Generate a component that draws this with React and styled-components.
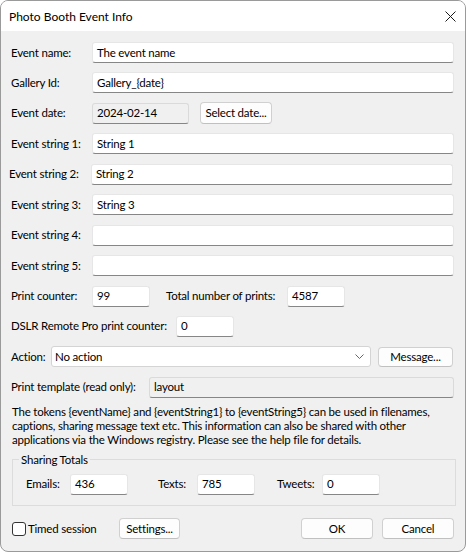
import React from "react"
import styled, { createGlobalStyle } from "styled-components"

const GlobalStyle = createGlobalStyle`
  html, body {
    margin: 0;
    padding: 0;
    background: #ffffff;
  }
  * {
    box-sizing: border-box;
  }
`

const Window = styled.div`
  width: 466px;
  height: 552px;
  border: 1px solid #9a9a9a;
  border-radius: 8px;
  overflow: hidden;
  background: #f0f0f0;
  font-family: Lato, "Noto Sans", sans-serif;
  font-size: 11.5px;
  letter-spacing: -0.2px;
  color: #000;
  display: flex;
  flex-direction: column;
`

const TitleBar = styled.div`
  height: 30px;
  background: #fff;
  display: flex;
  align-items: center;
  justify-content: space-between;
  padding: 0 8px 0 8px;
  flex: none;
`

const Title = styled.span`
  font-size: 12px;
  letter-spacing: 0;
  line-height: 14px;
  margin-top: 1px;
`

const CloseIcon = styled.svg`
  width: 11px;
  height: 11px;
  margin-right: 1px;
`

const Form = styled.div`
  padding: 11px 11px 0 10px;
  display: flex;
  flex-direction: column;
`

const Fields = styled.div`
  display: flex;
  flex-direction: column;
  gap: 9.45px;
`

const Row = styled.div`
  display: flex;
  align-items: center;
  height: 21px;
  margin-left: ${(p) => (p.$shift ? "-2px" : "0")};
  margin-right: ${(p) => (p.$shift ? "1px" : "0")};
`

const Label = styled.span`
  flex: none;
  width: ${(p) => p.$w}px;
  margin-left: ${(p) => p.$ml || 0}px;
  white-space: nowrap;
  line-height: 14px;
`

const Input = styled.div`
  flex: ${(p) => (p.$w ? "none" : "1")};
  width: ${(p) => (p.$w ? `${p.$w}px` : "auto")};
  height: 21px;
  border: 1px solid ${(p) => (p.$readonly ? "#dadada" : "#e6e6e6")};
  border-bottom-color: #868686;
  border-radius: 3px;
  background: ${(p) => (p.$readonly ? "#f0f0f0" : "#fff")};
  padding: 0 4px;
  display: flex;
  align-items: center;
  line-height: 14px;
  white-space: nowrap;
`

const Button = styled.div`
  flex: none;
  width: ${(p) => p.$w}px;
  height: ${(p) => p.$h || 21}px;
  margin-left: ${(p) => p.$ml || 0}px;
  border: 1px solid #d0d0d0;
  border-bottom-color: #c0c0c0;
  border-radius: 4px;
  background: #fdfdfd;
  display: flex;
  align-items: center;
  justify-content: center;
  line-height: 14px;
  white-space: nowrap;
`

const Select = styled.div`
  flex: none;
  width: 320px;
  height: 21px;
  margin-left: 40px;
  border: 1px solid #d4d4d4;
  border-radius: 3px;
  background: #fff;
  display: flex;
  align-items: center;
  justify-content: space-between;
  padding: 0 6px 0 3px;
  line-height: 14px;
`

const Chevron = styled.svg`
  width: 9px;
  height: 5px;
`

const Note = styled.p`
  margin: 7px 0 0 1px;
  line-height: 14px;
  white-space: nowrap;
`

const Group = styled.fieldset`
  margin: 6px 0 0 1px;
  width: 444px;
  border: 1px solid #dcdcdc;
  padding: 0 0 10px 0;
`

const Legend = styled.legend`
  margin-left: 6px;
  padding: 0 2px;
  line-height: 14px;
`

const ShareRow = styled.div`
  display: flex;
  align-items: center;
  height: 21px;
  margin-top: 7px;
  padding-left: 13px;
`

const Footer = styled.div`
  display: flex;
  align-items: center;
  height: 22px;
  margin-top: 12px;
  margin-left: 1px;
`

const Check = styled.span`
  flex: none;
  width: 14px;
  height: 14px;
  border: 1px solid #333;
  border-radius: 3px;
  background: #fff;
  margin-right: 2px;
`

const Spacer = styled.div`
  flex: 1;
`

const App = () => (
  <>
    <GlobalStyle />
    <Window>
      <TitleBar>
        <Title>Photo Booth Event Info</Title>
        <CloseIcon viewBox="0 0 11 11">
          <path d="M0.5 0.5 L10.5 10.5 M10.5 0.5 L0.5 10.5" stroke="#1a1a1a" strokeWidth="1" />
        </CloseIcon>
      </TitleBar>
      <Form>
        <Fields>
          <Row>
            <Label $w={81}>Event name:</Label>
            <Input>The event name</Input>
          </Row>
          <Row>
            <Label $w={81}>Gallery Id:</Label>
            <Input>Gallery_{"{date}"}</Input>
          </Row>
          <Row>
            <Label $w={81}>Event date:</Label>
            <Input $w={97} $readonly>
              2024-02-14
            </Input>
            <Button $w={72} $h={22} $ml={11}>
              Select date...
            </Button>
          </Row>
          <Row>
            <Label $w={81}>Event string 1:</Label>
            <Input>String 1</Input>
          </Row>
          <Row $shift>
            <Label $w={82}>Event string 2:</Label>
            <Input>String 2</Input>
          </Row>
          <Row>
            <Label $w={81}>Event string 3:</Label>
            <Input>String 3</Input>
          </Row>
          <Row>
            <Label $w={81}>Event string 4:</Label>
            <Input />
          </Row>
          <Row>
            <Label $w={81}>Event string 5:</Label>
            <Input />
          </Row>
          <Row>
            <Label $w={81}>Print counter:</Label>
            <Input $w={58}>99</Input>
            <Label $w={121} $ml={16}>
              Total number of prints:
            </Label>
            <Input $w={58}>4587</Input>
          </Row>
          <Row>
            <Label $w={165}>DSLR Remote Pro print counter:</Label>
            <Input $w={58}>0</Input>
          </Row>
          <Row>
            <Label $w={0}>Action:</Label>
            <Select>
              <span>No action</span>
              <Chevron viewBox="0 0 9 5">
                <path d="M0.5 0.5 L4.5 4.5 L8.5 0.5" fill="none" stroke="#666" strokeWidth="1" />
              </Chevron>
            </Select>
            <Button $w={75} $h={20} $ml={7}>
              Message...
            </Button>
          </Row>
          <Row>
            <Label $w={138}>Print template (read only):</Label>
            <Input $readonly>layout</Input>
          </Row>
        </Fields>
        <Note>
          The tokens {"{eventName}"} and {"{eventString1}"} to {"{eventString5}"} can be used in filenames,
          <br />
          captions, sharing message text etc. This information can also be shared with other
          <br />
          applications via the Windows registry. Please see the help file for details.
        </Note>
        <Group>
          <Legend>Sharing Totals</Legend>
          <ShareRow>
            <Label $w={44}>Emails:</Label>
            <Input $w={58}>436</Input>
            <Label $w={39} $ml={30}>
              Texts:
            </Label>
            <Input $w={58}>785</Input>
            <Label $w={45} $ml={22}>
              Tweets:
            </Label>
            <Input $w={58}>0</Input>
          </ShareRow>
        </Group>
        <Footer>
          <Check />
          <Label $w={91}>Timed session</Label>
          <Button $w={61}>Settings...</Button>
          <Spacer />
          <Button $w={72}>OK</Button>
          <Button $w={72} $ml={9}>
            Cancel
          </Button>
        </Footer>
      </Form>
    </Window>
  </>
)

export default App
